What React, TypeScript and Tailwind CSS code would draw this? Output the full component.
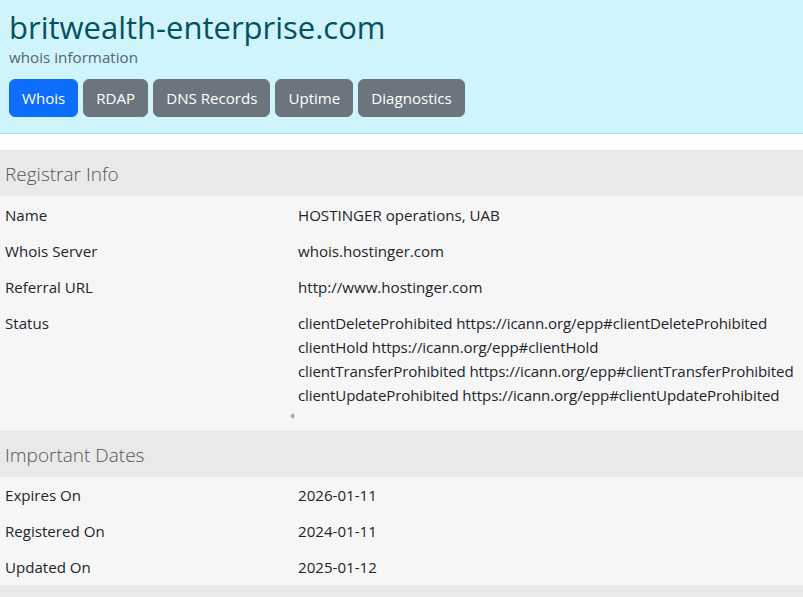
const tabs = ["Whois", "RDAP", "DNS Records", "Uptime", "Diagnostics"];

const registrar: [string, string[]][] = [
  ["Name", ["HOSTINGER operations, UAB"]],
  ["Whois Server", ["whois.hostinger.com"]],
  ["Referral URL", ["http://www.hostinger.com"]],
];

const statuses = [
  "clientDeleteProhibited https://icann.org/epp#clientDeleteProhibited",
  "clientHold https://icann.org/epp#clientHold",
  "clientTransferProhibited https://icann.org/epp#clientTransferProhibited",
  "clientUpdateProhibited https://icann.org/epp#clientUpdateProhibited",
];

const dates: [string, string][] = [
  ["Expires On", "2026-01-11"],
  ["Registered On", "2024-01-11"],
  ["Updated On", "2025-01-12"],
];

function SectionTitle({ children }: { children?: React.ReactNode }) {
  return (
    <div className="bg-[#e9e9e9] px-[5px] pt-[11px] pb-[9px] text-[19px] leading-[26px] font-light text-[#555]">
      {children}
    </div>
  );
}

function Row({ label, children }: { label: string; children: React.ReactNode }) {
  return (
    <div className="grid grid-cols-[293px_1fr]">
      <div className="px-[5px] py-[6px]">{label}</div>
      <div className="px-[5px] py-[6px]">{children}</div>
    </div>
  );
}

export default function App() {
  return (
    <div className="min-h-[597px] bg-white text-[15.1px] leading-[24px] text-[#212529] font-['Segoe_UI','Open_Sans',sans-serif]">
      <header className="bg-[#cff4fc] border-b border-[#a6e3ef] px-[9px] pt-[7px] pb-[16px]">
        <h1 className="text-[31px] leading-[41px] font-medium text-[#055160]">britwealth-enterprise.com</h1>
        <p className="text-[15.2px] leading-[18px] text-[#56666a]">whois information</p>
        <nav className="mt-[13px] flex gap-[5px]">
          {tabs.map((t, i) => (
            <button
              key={t}
              className={
                i === 0
                  ? "rounded-[6px] border border-[#0d6efd] bg-[#0d6efd] px-3 py-[6px] text-white"
                  : "rounded-[6px] border border-[#6c757d] bg-[#6c757d] px-3 py-[6px] text-white"
              }
            >
              {t}
            </button>
          ))}
        </nav>
      </header>

      <main className="mt-4">
        <section>
          <SectionTitle>Registrar Info</SectionTitle>
          <div className="bg-[#f6f6f6] pt-px">
            {registrar.map(([label, values]) => (
              <Row key={label} label={label}>
                {values.join(" ")}
              </Row>
            ))}
            <div className="grid grid-cols-[293px_1fr]">
              <div className="px-[5px] py-[6px]">Status</div>
              <div className="min-w-0 px-[5px] py-[6px]">
                <div className="overflow-hidden whitespace-nowrap tracking-[-0.12px]">
                  {statuses.map((s) => (
                    <div key={s}>{s}</div>
                  ))}
                </div>
                <div className="-ml-[8px] flex h-[18px] items-center">
                  <span className="h-0 w-0 border-y-[3px] border-r-[4px] border-y-transparent border-r-[#a3a3a3]" />
                </div>
              </div>
            </div>
          </div>
        </section>

        <section>
          <SectionTitle>Important Dates</SectionTitle>
          <div className="bg-[#f6f6f6]">
            {dates.map(([label, value]) => (
              <Row key={label} label={label}>
                {value}
              </Row>
            ))}
          </div>
        </section>

        <section>
          <SectionTitle>&nbsp;</SectionTitle>
        </section>
      </main>
    </div>
  );
}
